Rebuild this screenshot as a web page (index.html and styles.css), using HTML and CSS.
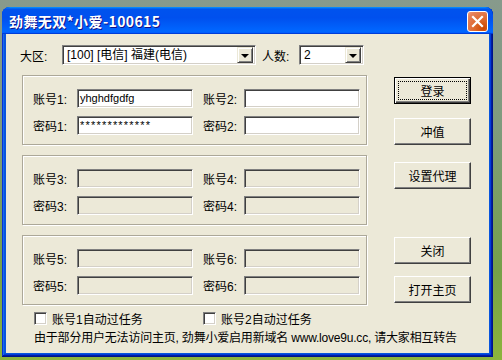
FILE: index.html
```html
<!DOCTYPE html>
<html>
<head>
<meta charset="utf-8">
<link rel="stylesheet" href="styles.css">
</head>
<body>
<div class="desk">
  <div class="win">
    <div class="title">
      <span class="ttext">劲舞无双*小爱-100615</span>
      <span class="close"><svg width="13" height="13" viewBox="0 0 13 13"><path d="M2 2 L11 11 M11 2 L2 11" stroke="#fff" stroke-width="2.2" stroke-linecap="square"/></svg></span>
    </div>
    <div class="client">
      <div class="toprow">
        <span class="lbl-zone">大区:</span>
        <div class="combo combo-zone"><span class="ctext">[100] [电信] 福建(电信)</span><span class="drop"><span class="tri"></span></span></div>
        <span class="lbl-num">人数:</span>
        <div class="combo combo-num"><span class="ctext">2</span><span class="drop"><span class="tri"></span></span></div>
      </div>
      <div class="main">
        <div class="groups">
          <div class="group">
            <span class="lbl">账号1:</span><div class="inp"><span class="val">yhghdfgdfg</span></div>
            <span class="lbl lbl2">账号2:</span><div class="inp"></div>
            <span class="lbl">密码1:</span><div class="inp"><span class="val pw">*************</span></div>
            <span class="lbl lbl2">密码2:</span><div class="inp"></div>
          </div>
          <div class="group">
            <span class="lbl">账号3:</span><div class="inp off"></div>
            <span class="lbl lbl2">账号4:</span><div class="inp off"></div>
            <span class="lbl">密码3:</span><div class="inp off"></div>
            <span class="lbl lbl2">密码4:</span><div class="inp off"></div>
          </div>
          <div class="group">
            <span class="lbl">账号5:</span><div class="inp off"></div>
            <span class="lbl lbl2">账号6:</span><div class="inp off"></div>
            <span class="lbl">密码5:</span><div class="inp off"></div>
            <span class="lbl lbl2">密码6:</span><div class="inp off"></div>
          </div>
        </div>
        <div class="btns">
          <div class="btn default b-login">登录</div>
          <div class="btn b-pay">冲值</div>
          <div class="btn b-proxy">设置代理</div>
          <div class="btn b-close">关闭</div>
          <div class="btn b-home">打开主页</div>
        </div>
      </div>
      <div class="checks">
        <div class="chk chk1"><span class="cb"></span><span>账号1自动过任务</span></div>
        <div class="chk"><span class="cb"></span><span>账号2自动过任务</span></div>
      </div>
      <div class="note">由于部分用户无法访问主页, 劲舞小爱启用新域名 www.love9u.cc, 请大家相互转告</div>
    </div>
  </div>
</div>
</body>
</html>
```
FILE: styles.css
```css
html, body {
  margin: 0;
  padding: 0;
}
body {
  width: 502px;
  height: 360px;
  overflow: hidden;
  background: linear-gradient(180deg, #879a8c 0%, #7f9b7e 35%, #76a04a 75%, #8cb43c 100%);
  font-family: "Liberation Sans", "Noto Sans CJK SC", sans-serif;
  font-size: 12px;
  color: #000;
}
.desk {
  padding: 7px 0 0 2px;
  height: 360px;
  box-sizing: border-box;
}
.win {
  width: 491px;
  height: 350px;
  box-sizing: border-box;
  padding: 0 4px 4px;
  border-radius: 8px 8px 0 0;
  background: #0855dd;
  box-shadow: inset -1px -1px #00138c, inset 1px 1px #0831d9, inset -2px -2px #001ea0, inset 2px 2px #166aee, inset -3px -3px #003bda, inset 3px 3px #0855dd;
  display: flex;
  flex-direction: column;
}
.title {
  height: 27px;
  margin: 0 -4px;
  padding: 0 5px 0 7px;
  border-radius: 8px 8px 0 0;
  background: linear-gradient(180deg, #0997ff, #0053ee 8%, #0050ee 40%, #0066ff 88%, #0066ff 93%, #005bff 95%, #003dd7 96%, #003dd7);
  display: flex;
  align-items: center;
  justify-content: space-between;
}
.ttext {
  color: #fff;
  font-family: "Noto Sans CJK SC", sans-serif;
  font-weight: bold;
  font-size: 14px;
  letter-spacing: 0.4px;
  line-height: 16px;
  text-shadow: 1px 1px #0f1089;
}
.close {
  width: 19px;
  height: 19px;
  margin-top: 2px;
  border: 1px solid #fff;
  border-radius: 3px;
  background: radial-gradient(circle at 80% 85%, #cc4600 0%, #dc6527 35%, #e5805a 80%, #f0a080 100%);
  display: flex;
  align-items: center;
  justify-content: center;
}
.client {
  flex: 1;
  background: #ece9d8;
  padding-top: 11px;
}
.toprow {
  display: flex;
  align-items: center;
  height: 20px;
}
.lbl-zone {
  margin-left: 14px;
  width: 42px;
}
.lbl-num {
  margin-left: 6px;
  width: 37px;
}
.combo {
  height: 20px;
  box-sizing: border-box;
  background: #fff;
  border: 1px solid;
  border-color: #808080 #fff #fff #808080;
  box-shadow: inset 1px 1px #404040, inset -1px -1px #d4d0c8;
  display: flex;
  align-items: center;
  padding: 2px 2px 2px 2px;
}
.combo-zone { width: 194px; }
.combo-num { width: 65px; }
.ctext {
  flex: 1;
  padding-left: 2px;
  white-space: nowrap;
  overflow: hidden;
  line-height: 14px;
}
.drop {
  width: 16px;
  height: 16px;
  box-sizing: border-box;
  background: #ece9d8;
  border: 1px solid;
  border-color: #ece9d8 #404040 #404040 #ece9d8;
  box-shadow: inset 1px 1px #fff, inset -1px -1px #808080;
  display: flex;
  align-items: center;
  justify-content: center;
}
.tri {
  width: 0;
  height: 0;
  border-left: 4px solid transparent;
  border-right: 4px solid transparent;
  border-top: 4px solid #000;
  margin-top: 1px;
}
.main {
  display: flex;
  margin-top: 10px;
  padding-left: 16px;
  gap: 27px;
}
.groups {
  width: 345px;
  display: flex;
  flex-direction: column;
  gap: 10px;
}
.group {
  height: 70px;
  box-sizing: border-box;
  border: 1px solid #aca899;
  box-shadow: inset 1px 1px #fff, 1px 1px #fff;
  padding: 13px 0 0 10px;
  display: grid;
  grid-template-columns: 44px 116px 51px 116px;
  grid-template-rows: 19px 19px;
  row-gap: 8px;
  align-items: center;
}
.lbl {
  white-space: nowrap;
}
.lbl2 {
  padding-left: 10px;
}
.inp {
  height: 19px;
  box-sizing: border-box;
  background: #fff;
  border: 1px solid;
  border-color: #808080 #fff #fff #808080;
  box-shadow: inset 1px 1px #404040, inset -1px -1px #d4d0c8;
  display: flex;
  align-items: center;
  padding-left: 2px;
}
.inp.off {
  background: #ece9d8;
}
.val {
  font-size: 11px;
  line-height: 13px;
}
.pw {
  letter-spacing: 1.2px;
}
.btns {
  width: 77px;
  display: flex;
  flex-direction: column;
}
.btn {
  height: 27px;
  box-sizing: border-box;
  background: #ece9d8;
  border: 1px solid;
  border-color: #fff #404040 #404040 #fff;
  box-shadow: inset -1px -1px #808080;
  display: flex;
  align-items: center;
  justify-content: center;
  white-space: nowrap;
}
.btn.default {
  border-color: #000;
  box-shadow: inset 1px 1px #fff, inset -1px -1px #404040, inset -2px -2px #808080;
  outline: 1px dotted #000;
  outline-offset: -5px;
}
.b-login { margin-top: 2px; }
.b-pay { margin-top: 14px; }
.b-proxy { margin-top: 17px; }
.b-close { margin-top: 48px; }
.b-home { margin-top: 12px; }
.checks {
  display: flex;
  margin-top: 7px;
  padding-left: 28px;
  height: 13px;
}
.chk {
  display: flex;
  align-items: center;
  gap: 5px;
  white-space: nowrap;
}
.chk1 {
  width: 169px;
}
.cb {
  width: 13px;
  height: 13px;
  box-sizing: border-box;
  background: #fff;
  border: 1px solid;
  border-color: #808080 #fff #fff #808080;
  box-shadow: inset 1px 1px #404040, inset -1px -1px #d4d0c8;
  flex: none;
}
.note {
  margin-top: 5px;
  padding-left: 28px;
  line-height: 16px;
  white-space: nowrap;
  letter-spacing: -0.2px;
}
```
